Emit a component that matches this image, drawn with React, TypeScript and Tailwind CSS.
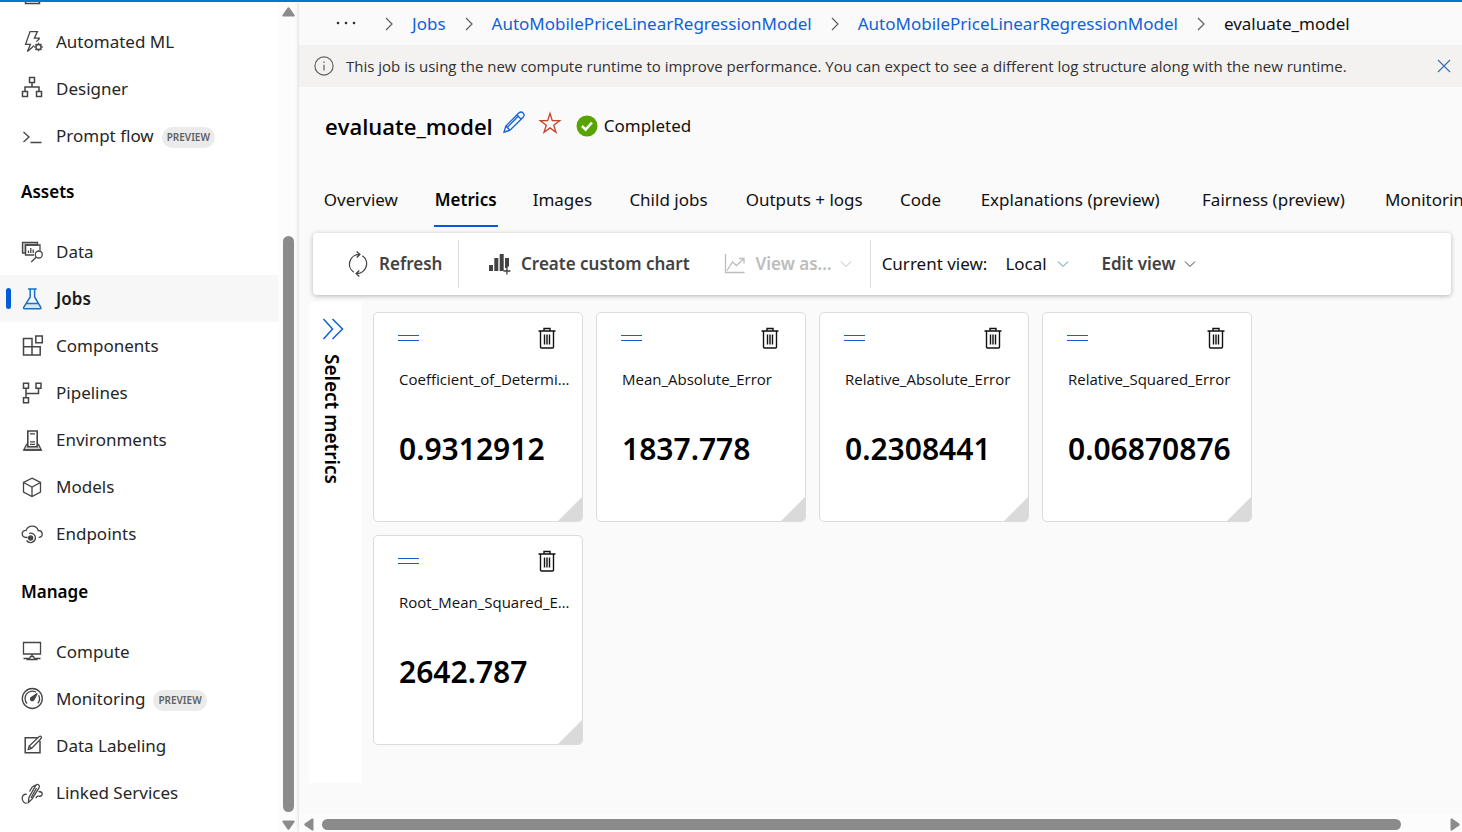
import React from "react";

type IconProps = { children: React.ReactNode; className?: string };

function Icon({ children, className = "size-[22px]" }: IconProps) {
  return (
    <svg
      viewBox="0 0 22 22"
      className={`${className} shrink-0 overflow-visible`}
      fill="none"
      stroke="currentColor"
      strokeWidth="1.3"
      aria-hidden="true"
    >
      {children}
    </svg>
  );
}

function Chevron({ className }: { className: string }) {
  return (
    <svg viewBox="0 0 12 8" className={`h-2 w-3 shrink-0 ${className}`} fill="none" stroke="currentColor" aria-hidden="true">
      <path d="M1 1.5 6 6.5 11 1.5" />
    </svg>
  );
}

type Item = { label: string; icon: React.ReactNode; preview?: boolean; active?: boolean };

const authoring: Item[] = [
  {
    label: "Automated ML",
    icon: (
      <>
        <path d="M18.8 7.2H13.4L16.4.6H9L4.6 13.4H9.4L6.4 20.4 11 16.4M18.8 7.2 15.4 10.6M11 16.4 13 14.6" />
        <circle cx="17.5" cy="16" r="2.5" />
        <path strokeWidth="1.5" d="M17.5 11.7v1.6M17.5 18.7v1.6M13.2 16h1.6M20.2 16h1.6M14.5 13l1.1 1.1M19.4 17.9l1.1 1.1M20.5 13l-1.1 1.1M15.6 17.9 14.5 19" />
      </>
    ),
  },
  {
    label: "Designer",
    icon: <path strokeWidth="1.5" d="M8.500-.5h5v5h-5zM11 4.500v4M4 13.500V9h14v4.500M1.500 13.500h5v5h-5zM15.500 13.500h5v5h-5z" />,
  },
  { label: "Prompt flow", preview: true, icon: <path d="M2.5 7 8 12l-5.500 5M9.500 17.500h11" /> },
];

const assets: Item[] = [
  {
    label: "Data",
    icon: (
      <>
        <path fill="#d0d0d0" d="M1.500 1.500h15v2.500h-12v8h-3z" />
        <path d="M13 14H4.500V4H19v5.500M7.500 9.500V12M9.800 7V12M12.200 8.500V12" />
        <circle cx="17.800" cy="13.500" r="3.500" />
        <path d="m15.300 16-5 5" />
      </>
    ),
  },
  {
    label: "Jobs",
    active: true,
    icon: (
      <>
        <path fill="#d5e8f7" stroke="none" d="M5 15.500h12.500l2.500 5h-17.500z" />
        <path strokeWidth="1.500" d="M7 1h8.700M9.200 1v8L2.700 19.300q-.7 1.500 1 1.500h15.100q1.700 0 1-1.500L13.600 9V1M5.200 15.500h12.300" />
      </>
    ),
  },
  {
    label: "Components",
    icon: <path strokeWidth="1.500" d="M2.500 3.500H11V20H2.500zM2.500 11.800H19.200V20H11M19.200 20V11.800M14.800 1H21.300V7.700H14.800z" />,
  },
  {
    label: "Pipelines",
    icon: <path strokeWidth="1.500" d="M2.500 1.200h5v5h-5zM15 1.200h5v5h-5zM2.500 15.700h5v5h-5zM5 6.200v9.500M5 11.500h12.500V6.200" />,
  },
  {
    label: "Environments",
    icon: (
      <>
        <path fill="#d5d5d5" d="M5.500 15.500 2.700 21H20.300L17.500 15.500z" />
        <path fill="#fff" strokeWidth="1.600" d="M6.800 2h9.400v15.800H6.800z" />
        <path d="M9 4.800h5M9 12.800h5M9 15.300h5M2.700 21H20.300" />
      </>
    ),
  },
  { label: "Models", icon: <path d="M11 2.200 19.500 6.500V16L11 20.500 2.500 16V6.500zM2.500 6.500 11 11l8.500-4.500M11 11v9.500" /> },
  {
    label: "Endpoints",
    icon: (
      <>
        <path d="M6.500 14.500H5.200C2.600 14.300 1.200 12.800 1.200 10.800 1.200 8.500 3 7.200 5.200 7.300 6 4.800 8.500 3.200 11.300 3.200c2.900 0 5.200 1.700 5.900 4.300 2.300.1 4 1.500 4 3.600 0 2-1.500 3.300-3.500 3.300" />
        <path d="M5.500 17.500A5 5 0 0 0 14.500 15 4.800 4.800 0 0 0 8 10.500M6.800 14.500h3" />
        <circle cx="9.700" cy="15" r="2" fill="currentColor" />
      </>
    ),
  },
];

const manage: Item[] = [
  {
    label: "Compute",
    icon: <path d="M2.500 1.500h17V13h-17zM11 13v3M9.500 15.500h3l1.500 3h-6zM2.500 17.500h6M13.500 17.500h6M5.500 18.500h11" />,
  },
  {
    label: "Monitoring",
    preview: true,
    icon: (
      <>
        <circle cx="11.300" cy="10.500" r="10" />
        <path d="M6 15.500A7.300 7.300 0 0 1 15 4.200M17.600 7.200A7.300 7.300 0 0 1 16.800 15.300" />
        <path fill="currentColor" d="M16.200 5.500 13 11.500a1.800 1.800 0 1 1-2.300-2.300z" />
      </>
    ),
  },
  {
    label: "Data Labeling",
    icon: (
      <>
        <path strokeWidth="1.500" d="M16.500 2.700H4.200V17.700H19V6" />
        <path d="M7.200 14.500 8.200 11 18.200 1.500q1.300-.8 2 .2t-.3 2L10.500 13.400zM8.200 11l2.300 2.400" />
      </>
    ),
  },
  {
    label: "Linked Services",
    icon: (
      <path d="M7.300 20.500 8 15.500 14.700 3.500q1.500-1.700 2.800-.8 1.500 1 .6 2.900L11 17.200zM10 16l5.500-10M5.800 12.500C3.200 11.600 1.200 13.600 1.200 16.200c0 2.800 2 5.200 4.600 5M11.200 5 8.500 9.500M11.200 5l3.500-2M17.500 9.500c2 0 3.700.8 3.700 2.500s-1.700 2.500-3.500 2.200c-1.700-.3-2.700.8-2.700 2" />
    ),
  },
];

function NavRow({ item }: { item: Item }) {
  return (
    <a
      href="#"
      aria-current={item.active ? "page" : undefined}
      className={`relative flex h-[47px] items-center pl-[21px] text-[17px] ${
        item.active ? "bg-[#f7f7f7] font-semibold text-[#1b1b1b]" : "text-[#262626]"
      }`}
    >
      {item.active && <span className="absolute left-1.5 h-[21px] w-[5px] rounded-full bg-[#015cda]" />}
      <Icon className={item.active ? "size-[22px] text-[#1672c4]" : "size-[22px] text-[#454545]"}>{item.icon}</Icon>
      <span className="ml-[13px]">{item.label}</span>
      {item.preview && (
        <span className="mt-[3px] ml-2 flex h-[21px] items-center rounded-full bg-[#ebebeb] px-[5px] text-[10px] font-semibold text-[#616161]">
          PREVIEW
        </span>
      )}
    </a>
  );
}

function NavHeading({ children }: { children: React.ReactNode }) {
  return <h2 className="h-[69px] pt-[21px] pl-[21px] text-[17px] leading-6 font-semibold text-black">{children}</h2>;
}

function Sidebar() {
  return (
    <div className="flex w-[299px] shrink-0 bg-white">
      <nav className="w-[278px] overflow-hidden">
        <div className="flex h-4 items-end overflow-hidden">
          <a href="#" aria-label="Notebooks" className="flex h-[47px] items-center pl-[21px] text-[#454545]">
            <Icon>
              <path strokeWidth="1.500" d="M4.500 2h14v17.500h-14z" />
            </Icon>
          </a>
        </div>
        {authoring.map((i) => <NavRow key={i.label} item={i} />)}
        <NavHeading>Assets</NavHeading>
        <div className="pb-0.5">
          {assets.map((i) => <NavRow key={i.label} item={i} />)}
        </div>
        <NavHeading>Manage</NavHeading>
        {manage.map((i) => <NavRow key={i.label} item={i} />)}
      </nav>
      <div className="flex flex-1 flex-col items-center bg-[#fcfcfc] pt-[5px] pb-0.5 text-[#8b8b8b]">
        <svg viewBox="0 0 13 10" className="h-2.5 w-[13px]" fill="currentColor" aria-hidden="true">
          <path d="M5.500.8q1-1 2 0l5 7.200q.5 1.500-1 1.500h-10q-1.500 0-1-1.500z" />
        </svg>
        <div className="mt-[219px] w-[11px] flex-1 rounded-full bg-[#8b8b8b]" />
        <svg viewBox="0 0 13 10" className="mt-2 h-2.5 w-[13px]" fill="currentColor" aria-hidden="true">
          <path d="M5.500 9.200q1 1 2 0l5-7.200q.5-1.500-1-1.500h-10q-1.500 0-1 1.500z" />
        </svg>
      </div>
    </div>
  );
}

function CrumbSeparator() {
  return (
    <svg viewBox="0 0 8 14" className="h-3.5 w-2 shrink-0 text-[#605e5c]" fill="none" stroke="currentColor" strokeWidth="1.200" aria-hidden="true">
      <path d="M1 1l6 6-6 6" />
    </svg>
  );
}

function Breadcrumb() {
  const link = "text-[#1160d8]";
  return (
    <nav aria-label="Breadcrumb" className="flex h-[43px] items-center overflow-hidden pl-[37px] text-[17px] whitespace-nowrap">
      <button type="button" aria-label="More" className="mr-[29px] mb-0.5 text-[#333]">
        <svg viewBox="0 0 20 4" className="h-1 w-5" fill="currentColor" aria-hidden="true">
          <circle cx="2" cy="2" r="1.300" />
          <circle cx="10" cy="2" r="1.300" />
          <circle cx="18" cy="2" r="1.300" />
        </svg>
      </button>
      <div className="flex items-center gap-[19px]">
        <CrumbSeparator />
        <a href="#" className={link}>Jobs</a>
        <CrumbSeparator />
        <a href="#" className={link}>AutoMobilePriceLinearRegressionModel</a>
        <CrumbSeparator />
        <a href="#" className={link}>AutoMobilePriceLinearRegressionModel</a>
        <CrumbSeparator />
        <span className="text-[#111]">evaluate_model</span>
      </div>
    </nav>
  );
}

function MessageBar() {
  return (
    <div className="flex h-[42px] items-center bg-[#f3f2f1] pr-[11px] pl-[15px] text-[#323130]">
      <Icon className="size-5 text-[#605e5c]">
        <circle cx="11" cy="11" r="10" />
        <path d="M11 9.500v6.500M11 6v1.800" />
      </Icon>
      <p className="ml-3 flex-1 font-['Open_Sans',sans-serif] text-[15px] whitespace-nowrap">
        This job is using the new compute runtime to improve performance. You can expect to see a different log structure along with the new runtime.
      </p>
      <button type="button" aria-label="Dismiss" className="text-[#3b6fae]">
        <svg viewBox="0 0 14 14" className="size-3.5" fill="none" stroke="currentColor" strokeWidth="1.200" aria-hidden="true">
          <path d="M1 1l12 12M13 1 1 13" />
        </svg>
      </button>
    </div>
  );
}

function TitleRow() {
  return (
    <div className="flex h-[78px] items-center pl-[26px]">
      <h1 className="font-['Open_Sans',sans-serif] text-[22px] font-semibold text-black">evaluate_model</h1>
      <button type="button" aria-label="Rename" className="mb-2 ml-2.5 text-[#1160d8]">
        <Icon>
          <path d="M1 21.200 2.800 15 15.800 2q2.300-2 4.300 0t0 4.300L7 19.200zM2.800 15 7 19.200M14 4l4.200 4.200M4.200 16.500 15.500 5" />
        </Icon>
      </button>
      <button type="button" aria-label="Favorite" className="mb-1.5 ml-3.5 text-[#c8402a]">
        <Icon>
          <path d="M11 1.500 13.300 8.700H20.700L14.700 13.200 17 20.300 11 15.900 5 20.300 7.300 13.200 1.300 8.700H8.700z" />
        </Icon>
      </button>
      <div className="ml-[15px] flex items-center gap-1.5 text-[17px] text-[#111]">
        <Icon>
          <circle cx="11" cy="11" r="10.500" fill="#57a300" stroke="none" />
          <path stroke="#fff" strokeWidth="2.500" d="m6 11 3.600 3.600L16 7.500" />
        </Icon>
        Completed
      </div>
    </div>
  );
}

const tabs = [
  "Overview",
  "Metrics",
  "Images",
  "Child jobs",
  "Outputs + logs",
  "Code",
  "Explanations (preview)",
  "Fairness (preview)",
  "Monitoring",
];

function Tabs() {
  return (
    <div role="tablist" className="flex h-[62px] items-end gap-[33px] overflow-hidden pl-[22px] text-[17px] whitespace-nowrap text-[#111]">
      {tabs.map((t) => (
        <button
          key={t}
          type="button"
          role="tab"
          aria-selected={t === "Metrics"}
          data-label={t}
          className={`flex h-[55px] shrink-0 flex-col items-center border-b-2 pt-4 leading-6 after:invisible after:h-0 after:overflow-hidden after:px-px after:font-semibold after:content-[attr(data-label)] ${
            t === "Metrics" ? "border-b-[#015cda] font-semibold text-black" : "border-b-transparent"
          }`}
        >
          {t}
        </button>
      ))}
    </div>
  );
}

function Toolbar() {
  return (
    <div className="mr-[11px] ml-3.5 mt-1.5 flex h-[62px] items-center rounded bg-white text-[17px] whitespace-nowrap shadow-[0_1px_5px_rgba(0,0,0,0.28)]">
      <button type="button" className="flex w-[145px] items-center gap-2.5 pl-[34px] font-semibold text-[#424242]">
        <Icon>
          <path d="M6.800 19.300A9.800 9.800 0 0 1 12.500 1.400M15.300 2.700A9.800 9.800 0 0 1 9.500 20.600M9.700-1.500l3.200 3-3.200 3M12.300 23.500l-3.200-3 3.200-3" />
        </Icon>
        Refresh
      </button>
      <div className="h-12 w-px bg-[#dcdcdc]" />
      <button type="button" className="ml-[30px] flex items-center gap-2.5 font-semibold text-[#424242]">
        <Icon>
          <path stroke="none" fill="currentColor" d="M0 12h4v6H0zM5.300 5h4v13h-4zM10.700 1h4v17h-4zM16 5h4v8.500h-1.400V15H16z" />
          <path d="M17.900 14.500v7M14.500 18h7" />
        </Icon>
        Create custom chart
      </button>
      <button type="button" disabled className="ml-[34px] flex items-center font-semibold text-[#bdbdbd]">
        <Icon>
          <path d="M1.500 1v18.500h19M3 17.500l5.500-8.500 4 3.500L20 5.500M15 5.500h5v5" />
        </Icon>
        <span className="mr-2 ml-2.5">View as...</span>
        <Chevron className="text-[#bdbdbd]" />
      </button>
      <div className="ml-[18px] h-12 w-px bg-[#dcdcdc]" />
      <label htmlFor="view" className="ml-[11px] text-[#111]">Current view:</label>
      <div className="relative ml-[18px] flex w-[64px] items-center">
        <select id="view" defaultValue="Local" className="w-full appearance-none bg-transparent text-[17px] text-[#111]">
          <option>Local</option>
        </select>
        <Chevron className="pointer-events-none absolute right-0 text-[#4a8fbf]" />
      </div>
      <button type="button" className="ml-8 flex items-center gap-2 font-semibold text-[#424242]">
        Edit view
        <Chevron className="text-[#424242]" />
      </button>
    </div>
  );
}

const metrics = [
  { name: "Coefficient_of_Determination", value: "0.9312912" },
  { name: "Mean_Absolute_Error", value: "1837.778" },
  { name: "Relative_Absolute_Error", value: "0.2308441" },
  { name: "Relative_Squared_Error", value: "0.06870876" },
  { name: "Root_Mean_Squared_Error", value: "2642.787" },
];

function MetricCard({ name, value }: { name: string; value: string }) {
  return (
    <article className="relative h-[210px] w-[210px] overflow-hidden rounded-[5px] border border-[#dcdcdc] bg-white">
      <div className="flex h-[50px] items-center justify-between pr-6 pl-6">
        <svg viewBox="0 0 21 6" className="h-1.5 w-[21px] text-[#1160d8]" stroke="currentColor" aria-hidden="true">
          <path d="M0 .5h21M0 5.500h21" />
        </svg>
        <button type="button" aria-label={`Delete ${name}`} className="text-[#111]">
          <Icon>
            <path strokeWidth="1.400" d="M2.500 4h17M8 4V1.500h6V4M4.500 4v16q0 1 1 1h11q1 0 1-1V4M8.500 7.500v10M11 7.500v10M13.500 7.500v10" />
          </Icon>
        </button>
      </div>
      <h3 className="mr-2.5 ml-[25px] truncate pt-1 font-['Open_Sans',sans-serif] text-[15px] leading-6 text-[#111]">{name}</h3>
      <p className="mt-[38px] ml-[25px] text-[30px] leading-10 font-semibold text-black">{value}</p>
      <svg viewBox="0 0 25 25" className="absolute -right-px -bottom-px size-[26px]" fill="#dadada" aria-hidden="true">
        <path d="M25 0v25H0z" />
      </svg>
    </article>
  );
}

function HorizontalScrollbar() {
  return (
    <div className="flex h-[18px] items-center bg-[#fcfcfc] pt-0.5 pr-0.5 pl-[5px] text-[#8b8b8b]">
      <svg viewBox="0 0 10 13" className="h-[13px] w-2.5" fill="currentColor" aria-hidden="true">
        <path d="M.8 5.500q-1 1 0 2l7.200 5q1.500.5 1.500-1v-10q0-1.500-1.500-1z" />
      </svg>
      <div className="mr-[49px] ml-2 h-[11px] flex-1 rounded-full bg-[#8b8b8b]" />
      <svg viewBox="0 0 10 13" className="h-[13px] w-2.5" fill="currentColor" aria-hidden="true">
        <path d="M9.200 5.500q1 1 0 2l-7.200 5q-1.500.5-1.500-1v-10q0-1.500 1.500-1z" />
      </svg>
    </div>
  );
}

export default function App() {
  return (
    <div className="flex h-screen flex-col overflow-hidden border-t-2 border-[#0078d4] bg-white font-['Noto_Sans','Open_Sans',sans-serif]">
      <div className="flex min-h-0 flex-1">
        <Sidebar />
        <main className="z-10 flex min-w-0 flex-1 flex-col bg-[#fafafa] shadow-[0_0_4px_rgba(0,0,0,0.2)]">
          <Breadcrumb />
          <MessageBar />
          <TitleRow />
          <Tabs />
          <Toolbar />
          <div className="mt-[7px] mr-[11px] mb-[31px] ml-2.5 flex min-h-0 flex-1">
            <button type="button" className="flex w-[53px] shrink-0 flex-col items-center bg-white pt-4">
              <Icon className="ml-[-6px] size-[22px] text-[#1160d8]">
                <path strokeWidth="1.500" d="M1.500 1 10.500 11 1.500 21M10.500 1 20.500 11 10.500 21" />
              </Icon>
              <span className="mt-3.5 mr-2 text-[19px] leading-6 font-semibold text-black [writing-mode:vertical-rl]">Select metrics</span>
            </button>
            <section aria-label="Metrics" className="flex flex-1 flex-wrap content-start gap-[13px] pt-2.5 pl-[11px]">
              {metrics.map((m) => <MetricCard key={m.name} {...m} />)}
            </section>
          </div>
          <HorizontalScrollbar />
        </main>
      </div>
    </div>
  );
}
